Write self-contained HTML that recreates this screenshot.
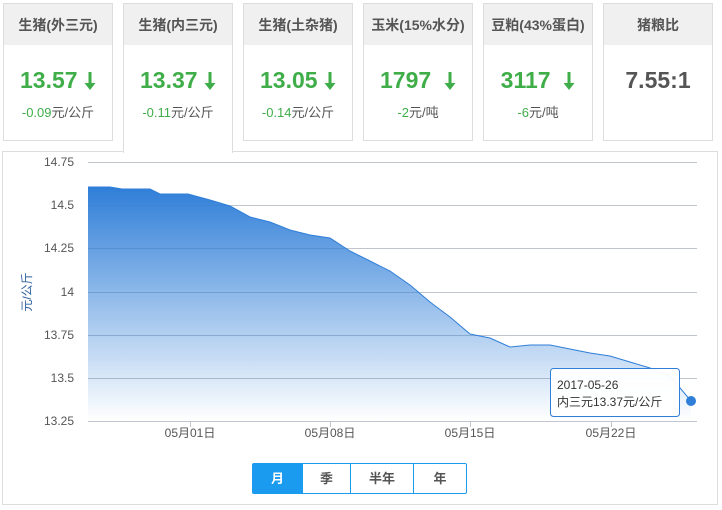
<!DOCTYPE html>
<html><head><meta charset="utf-8"><style>
*{margin:0;padding:0;box-sizing:border-box}
body{width:722px;height:510px;background:#fff;font-family:"Liberation Sans","Noto Sans CJK SC",sans-serif;position:relative;overflow:hidden}
.card{position:absolute;top:3px;width:110px;height:138px;border:1px solid #ddd;background:#fff}
.card .h{height:41px;background:#f0f0f0;text-align:center;line-height:42px;font-size:14px;font-weight:bold;color:#555}
.card .v{text-align:center;margin-top:22px;font-size:23px;font-weight:bold;color:#3fae49;height:30px}
.card .v svg{vertical-align:-2px}
.card .d{text-align:center;font-size:13px;color:#555;margin-top:5px}
.card .d b{font-weight:normal;color:#3fae49}
.panel{position:absolute;left:2px;top:151px;width:716px;height:354px;border:1px solid #ddd}
.act{height:150px;border-bottom:none;z-index:2}
.btns{position:absolute;left:252px;top:463px;height:31px;width:215px;border:1px solid #1a9bef;border-radius:2px;display:flex;font-size:13px;font-weight:bold;color:#555}
.btns div{text-align:center;line-height:29px;border-left:1px solid #1a9bef}
</style></head><body>
<div class="panel"></div>
<div class="card" style="left:3px"><div class="h">生猪(外三元)</div><div class="v">13.57 <svg width="12" height="18" viewBox="0 0 12 18"><path d="M4.5,0h3v11h4l-5.5,7l-5.5,-7h4z" fill="#3fae49"/></svg></div><div class="d"><b>-0.09</b>元/公斤</div></div>
<div class="card act" style="left:123px"><div class="h">生猪(内三元)</div><div class="v">13.37 <svg width="12" height="18" viewBox="0 0 12 18"><path d="M4.5,0h3v11h4l-5.5,7l-5.5,-7h4z" fill="#3fae49"/></svg></div><div class="d"><b>-0.11</b>元/公斤</div></div>
<div class="card" style="left:243px"><div class="h">生猪(土杂猪)</div><div class="v">13.05 <svg width="12" height="18" viewBox="0 0 12 18"><path d="M4.5,0h3v11h4l-5.5,7l-5.5,-7h4z" fill="#3fae49"/></svg></div><div class="d"><b>-0.14</b>元/公斤</div></div>
<div class="card" style="left:363px"><div class="h">玉米(15%水分)</div><div class="v">1797 &nbsp;<svg width="12" height="18" viewBox="0 0 12 18"><path d="M4.5,0h3v11h4l-5.5,7l-5.5,-7h4z" fill="#3fae49"/></svg></div><div class="d"><b>-2</b>元/吨</div></div>
<div class="card" style="left:483px"><div class="h">豆粕(43%蛋白)</div><div class="v">3117 &nbsp;<svg width="12" height="18" viewBox="0 0 12 18"><path d="M4.5,0h3v11h4l-5.5,7l-5.5,-7h4z" fill="#3fae49"/></svg></div><div class="d"><b>-6</b>元/吨</div></div>
<div class="card" style="left:603px"><div class="h">猪粮比</div><div class="v" style="color:#555">7.55:1</div></div>
<svg style="position:absolute;left:0;top:0" width="722" height="510">
<defs><linearGradient id="g" x1="0" y1="0" x2="0" y2="1"><stop offset="0" stop-color="#2f7ed8"/><stop offset="1" stop-color="#2f7ed8" stop-opacity="0"/></linearGradient></defs>
<g stroke="#c0c4ce" stroke-width="1">
<line x1="88" y1="162.5" x2="697" y2="162.5"/><line x1="88" y1="205.5" x2="697" y2="205.5"/><line x1="88" y1="248.5" x2="697" y2="248.5"/><line x1="88" y1="292.5" x2="697" y2="292.5"/><line x1="88" y1="335.5" x2="697" y2="335.5"/><line x1="88" y1="378.5" x2="697" y2="378.5"/><line x1="88" y1="421.5" x2="697" y2="421.5"/>
<line x1="190.5" y1="421" x2="190.5" y2="427"/><line x1="330.5" y1="421" x2="330.5" y2="427"/><line x1="470.5" y1="421" x2="470.5" y2="427"/><line x1="611.5" y1="421" x2="611.5" y2="427"/>
</g>
<path d="M88,187 L110,187 122,189 150,189 160,194 188,194 210,200 230,206 250,217 270,222 290,230 310,235 330,238 350,251 370,261 390,271 410,285 430,302 450,317 470,334 490,338 510,347 530,345 550,345 570,349 590,353 610,356 630,362 650,368 670,376 691,401 L691,421 L88,421Z" fill="url(#g)"/>
<path d="M88,187 L110,187 122,189 150,189 160,194 188,194 210,200 230,206 250,217 270,222 290,230 310,235 330,238 350,251 370,261 390,271 410,285 430,302 450,317 470,334 490,338 510,347 530,345 550,345 570,349 590,353 610,356 630,362 650,368 670,376 691,401" fill="none" stroke="#2f7ed8" stroke-width="1"/>
<circle cx="691" cy="401" r="5" fill="#2f7ed8"/>
<g font-size="12" fill="#555" text-anchor="end" font-family="Liberation Sans,sans-serif">
<text x="74" y="166">14.75</text><text x="74" y="209">14.5</text><text x="74" y="252">14.25</text><text x="74" y="296">14</text><text x="74" y="339">13.75</text><text x="74" y="382">13.5</text><text x="74" y="425">13.25</text></g>
<g font-size="12" fill="#555" text-anchor="middle" font-family="Liberation Sans,Noto Sans CJK SC,sans-serif">
<text x="190" y="437">05月01日</text><text x="330" y="437">05月08日</text><text x="470" y="437">05月15日</text><text x="611" y="437">05月22日</text></g>
<text transform="translate(31,292) rotate(-90)" font-size="12" fill="#2f5f9e" text-anchor="middle" font-family="Liberation Sans,Noto Sans CJK SC,sans-serif">元/公斤</text>
<rect x="550.5" y="368.5" width="129" height="48" rx="3" fill="#fff" fill-opacity="0.95" stroke="#2f7ed8"/>
<text x="557" y="389" font-size="12" fill="#333" font-family="Liberation Sans,Noto Sans CJK SC,sans-serif">2017-05-26</text>
<text x="557" y="406" font-size="12" fill="#333" font-family="Liberation Sans,Noto Sans CJK SC,sans-serif">内三元13.37元/公斤</text>
</svg>
<div class="btns"><div style="width:49px;border-left:none;background:#1a9bef;color:#fff">月</div><div style="width:48px">季</div><div style="width:63px">半年</div><div style="width:53px">年</div></div>
</body></html>
